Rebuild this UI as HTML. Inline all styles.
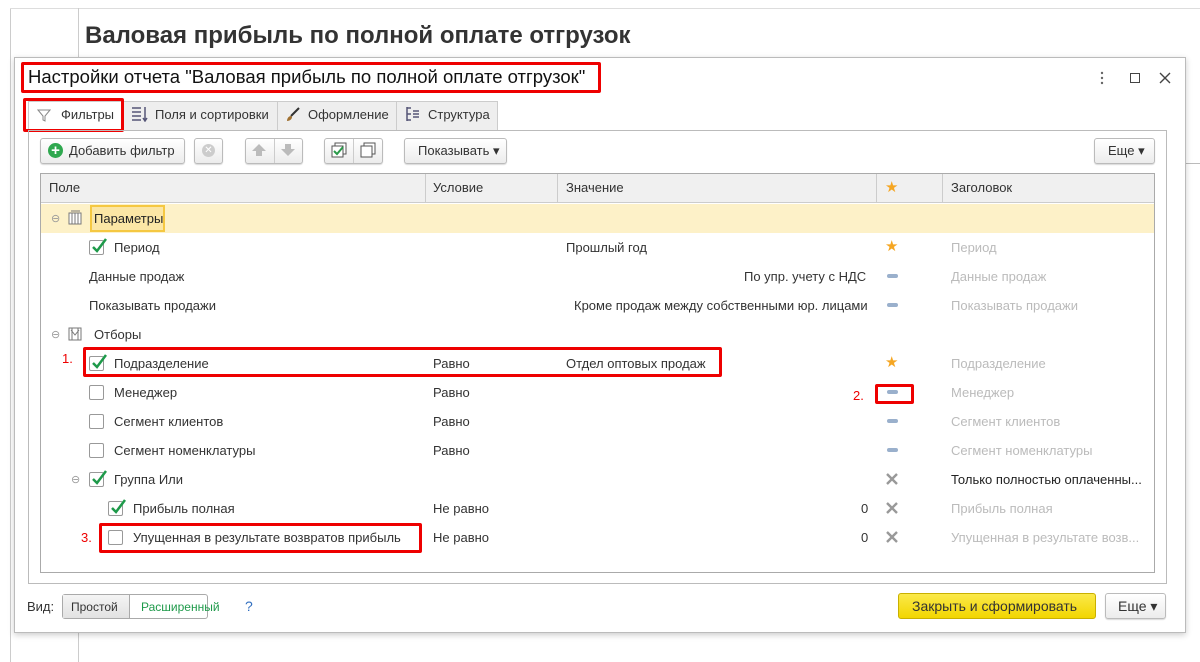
<!DOCTYPE html>
<html><head><meta charset="utf-8"><style>
*{box-sizing:border-box;margin:0;padding:0}
body{width:1200px;height:662px;position:relative;overflow:hidden;background:#fff;font-family:"Liberation Sans",Arial,sans-serif;font-size:13px;color:#333}
.a{position:absolute;white-space:nowrap}
.red{position:absolute;border:3px solid #e00;border-radius:2px}
.rl{position:absolute;color:#e00;font-size:13px}
.btn{position:absolute;border:1px solid #bbb;border-radius:3px;background:linear-gradient(#fff,#ececec);box-shadow:0 1px 1px rgba(0,0,0,.15)}
.cb{position:absolute;width:15px;height:15px;border:1px solid #999;border-radius:2px;background:#fff}
.cb svg{position:absolute;left:0;top:-4px}
.t{position:absolute;white-space:nowrap;line-height:16px}
.g{color:#bbb}
.dash{position:absolute;width:11px;height:4px;background:#9ab0cc;border-radius:2px}
.x{position:absolute}
.star{position:absolute;color:#f5a623;font-size:15px;line-height:14px}
</style></head><body>
<div class="a" style="left:10px;top:8px;width:1px;height:654px;background:#ccc"></div>
<div class="a" style="left:10px;top:8px;width:1190px;height:1px;background:#ddd"></div>
<div class="a" style="left:78px;top:8px;width:1px;height:654px;background:#ccc"></div>
<div class="a" style="left:1185px;top:163px;width:15px;height:1px;background:#bbb"></div>
<div class="a" style="left:85px;top:22px;font-size:24px;font-weight:bold;color:#333">Валовая прибыль по полной оплате отгрузок</div>

<div class="a" style="left:14px;top:57px;width:1172px;height:576px;background:#fff;border:1px solid #bbb;box-shadow:0 2px 6px rgba(0,0,0,.2)"></div>
<div class="a" style="left:28px;top:66px;font-size:18.5px;color:#111">Настройки отчета "Валовая прибыль по полной оплате отгрузок"</div>
<div class="red" style="left:21px;top:62px;width:580px;height:31px"></div>
<svg class="a" style="left:1098px;top:70px" width="8" height="16"><circle cx="4" cy="3" r="1.2" fill="#666"/><circle cx="4" cy="8" r="1.2" fill="#666"/><circle cx="4" cy="13" r="1.2" fill="#666"/></svg>
<div class="a" style="left:1130px;top:73px;width:10px;height:10px;border:1.5px solid #444"></div>
<svg class="a" style="left:1159px;top:72px" width="12" height="12"><path d="M1 1l10 10M11 1L1 11" stroke="#444" stroke-width="1.4"/></svg>

<!-- tabs -->
<div class="a" style="left:28px;top:101px;width:470px;height:29px;background:#eee;border:1px solid #ccc;border-bottom:none"></div>
<div class="a" style="left:28px;top:101px;width:94px;height:30px;background:#fff;border:1px solid #ccc;border-bottom:none"></div>
<div class="a" style="left:122px;top:101px;width:1px;height:29px;background:#ccc"></div>
<div class="a" style="left:277px;top:101px;width:1px;height:29px;background:#ccc"></div>
<div class="a" style="left:396px;top:101px;width:1px;height:29px;background:#ccc"></div>
<svg class="a" style="left:37px;top:108px" width="14" height="14"><path d="M1 2h12l-5 6v5l-2-1v-4z" fill="none" stroke="#888"/></svg>
<div class="t" style="left:61px;top:107px">Фильтры</div>
<svg class="a" style="left:131px;top:106px" width="18" height="16"><g stroke="#557" stroke-width="1.5"><path d="M1 2h9M1 6h9M1 10h9M1 14h9"/><path d="M14 1v14M12 12l2 3 2-3" fill="none"/></g></svg>
<div class="t" style="left:155px;top:107px">Поля и сортировки</div>
<svg class="a" style="left:285px;top:106px" width="16" height="16"><path d="M14 2L6 10" stroke="#333" stroke-width="2"/><path d="M6 10c-2 0-4 2-4 5 3 0 5-2 5-4z" fill="#a07030"/></svg>
<div class="t" style="left:308px;top:107px">Оформление</div>
<svg class="a" style="left:405px;top:106px" width="16" height="16"><g stroke="#557" stroke-width="1.5" fill="none"><path d="M2 1v14M2 2h4M2 8h4M2 14h4M8 5h6M8 8h6M8 11h6"/></g></svg>
<div class="t" style="left:428px;top:107px">Структура</div>
<div class="red" style="left:23px;top:98px;width:101px;height:34px"></div>

<!-- inner panel -->
<div class="a" style="left:28px;top:130px;width:1139px;height:454px;border:1px solid #bbb"></div>

<!-- toolbar -->
<div class="btn" style="left:40px;top:138px;width:145px;height:26px"></div>
<div class="a" style="left:48px;top:143px;width:15px;height:15px;border-radius:50%;background:#2fa84f;color:#fff;font-weight:bold;font-size:15px;line-height:15px;text-align:center">+</div>
<div class="t" style="left:69px;top:143px">Добавить фильтр</div>
<div class="btn" style="left:194px;top:138px;width:29px;height:26px"></div>
<div class="a" style="left:202px;top:144px;width:13px;height:13px;border-radius:50%;background:#ccc;color:#fff;font-size:10px;line-height:13px;text-align:center">✕</div>
<div class="btn" style="left:245px;top:138px;width:58px;height:26px"></div>
<div class="a" style="left:274px;top:139px;width:1px;height:24px;background:#ccc"></div>
<svg class="a" style="left:251px;top:143px" width="16" height="14"><path d="M8 1l7 7h-4v5H5V8H1z" fill="#bbb"/></svg>
<svg class="a" style="left:280px;top:143px" width="16" height="14"><path d="M8 13l7-7h-4V1H5v5H1z" fill="#bbb"/></svg>
<div class="btn" style="left:324px;top:138px;width:59px;height:26px"></div>
<div class="a" style="left:353px;top:139px;width:1px;height:24px;background:#ccc"></div>
<svg class="a" style="left:330px;top:142px" width="18" height="17"><rect x="5" y="1" width="11" height="11" fill="#fff" stroke="#555"/><rect x="2" y="4" width="11" height="11" fill="#fff" stroke="#555"/><path d="M4 9l3 3 6-7" stroke="#2a9a4a" stroke-width="2" fill="none"/></svg>
<svg class="a" style="left:359px;top:142px" width="18" height="17"><rect x="5" y="1" width="11" height="11" fill="#fff" stroke="#555"/><rect x="2" y="4" width="11" height="11" fill="#fff" stroke="#555"/></svg>
<div class="btn" style="left:404px;top:138px;width:103px;height:26px"></div>
<div class="t" style="left:418px;top:143px">Показывать ▾</div>
<div class="btn" style="left:1094px;top:138px;width:61px;height:26px"></div>
<div class="t" style="left:1108px;top:143px">Еще ▾</div>

<!-- table -->
<div class="a" style="left:40px;top:173px;width:1115px;height:400px;border:1px solid #aaa"></div>
<div class="a" style="left:41px;top:174px;width:1113px;height:29px;background:#f0f0f0;border-bottom:1px solid #ccc"></div>
<div class="a" style="left:425px;top:174px;width:1px;height:29px;background:#ccc"></div>
<div class="a" style="left:557px;top:174px;width:1px;height:29px;background:#ccc"></div>
<div class="a" style="left:876px;top:174px;width:1px;height:29px;background:#ccc"></div>
<div class="a" style="left:942px;top:174px;width:1px;height:29px;background:#ccc"></div>
<div class="t" style="left:49px;top:180px">Поле</div>
<div class="t" style="left:433px;top:180px">Условие</div>
<div class="t" style="left:566px;top:180px">Значение</div>
<div class="star" style="left:885px;top:181px">★</div>
<div class="t" style="left:951px;top:180px">Заголовок</div>

<div class="a" style="left:41px;top:204px;width:1113px;height:29px;background:#fdf1c8"></div>
<div class="a" style="left:51px;top:212px;color:#999;font-size:11px">⊖</div>
<svg class="a" style="left:68px;top:209px" width="15" height="16"><rect x="1" y="4" width="12" height="11" fill="#fff" stroke="#777"/><path d="M4 4v11M7 4v11M10 4v11M3 2h9" stroke="#777"/></svg>
<div class="a" style="left:90px;top:205px;width:75px;height:27px;border:2px solid #f5c842;background:#fbe6a5"></div>
<div class="t" style="left:94px;top:211px;color:#222">Параметры</div>

<div class="cb" style="left:89px;top:240px"><svg width="18" height="18"><path d="M3 10l4 4 9-12" stroke="#1e9a4a" stroke-width="2.5" fill="none"/></svg></div>
<div class="t" style="left:114px;top:240px">Период</div>
<div class="t" style="left:566px;top:240px">Прошлый год</div>
<div class="star" style="left:885px;top:240px">★</div>
<div class="t g" style="left:951px;top:240px">Период</div>

<div class="t" style="left:89px;top:269px">Данные продаж</div>
<div class="t" style="left:744px;top:269px">По упр. учету с НДС</div>
<div class="dash" style="left:887px;top:274px"></div>
<div class="t g" style="left:951px;top:269px">Данные продаж</div>

<div class="t" style="left:89px;top:298px">Показывать продажи</div>
<div class="t" style="left:574px;top:298px">Кроме продаж между собственными юр. лицами</div>
<div class="dash" style="left:887px;top:303px"></div>
<div class="t g" style="left:951px;top:298px">Показывать продажи</div>

<div class="a" style="left:51px;top:328px;color:#999;font-size:11px">⊖</div>
<svg class="a" style="left:68px;top:325px" width="15" height="16"><rect x="1" y="3" width="12" height="12" fill="#fff" stroke="#777"/><path d="M4 3v12M10 3v12M3 5l4 5 4-5" stroke="#777" fill="none"/></svg>
<div class="t" style="left:94px;top:327px">Отборы</div>

<div class="cb" style="left:89px;top:356px"><svg width="18" height="18"><path d="M3 10l4 4 9-12" stroke="#1e9a4a" stroke-width="2.5" fill="none"/></svg></div>
<div class="t" style="left:114px;top:356px">Подразделение</div>
<div class="t" style="left:433px;top:356px">Равно</div>
<div class="t" style="left:566px;top:356px">Отдел оптовых продаж</div>
<div class="star" style="left:885px;top:356px">★</div>
<div class="t g" style="left:951px;top:356px">Подразделение</div>

<div class="cb" style="left:89px;top:385px"></div>
<div class="t" style="left:114px;top:385px">Менеджер</div>
<div class="t" style="left:433px;top:385px">Равно</div>
<div class="dash" style="left:887px;top:390px"></div>
<div class="t g" style="left:951px;top:385px">Менеджер</div>

<div class="cb" style="left:89px;top:414px"></div>
<div class="t" style="left:114px;top:414px">Сегмент клиентов</div>
<div class="t" style="left:433px;top:414px">Равно</div>
<div class="dash" style="left:887px;top:419px"></div>
<div class="t g" style="left:951px;top:414px">Сегмент клиентов</div>

<div class="cb" style="left:89px;top:443px"></div>
<div class="t" style="left:114px;top:443px">Сегмент номенклатуры</div>
<div class="t" style="left:433px;top:443px">Равно</div>
<div class="dash" style="left:887px;top:448px"></div>
<div class="t g" style="left:951px;top:443px">Сегмент номенклатуры</div>

<div class="a" style="left:71px;top:473px;color:#999;font-size:11px">⊖</div>
<div class="cb" style="left:89px;top:472px"><svg width="18" height="18"><path d="M3 10l4 4 9-12" stroke="#1e9a4a" stroke-width="2.5" fill="none"/></svg></div>
<div class="t" style="left:114px;top:472px">Группа Или</div>
<svg class="x" style="left:886px;top:473px" width="12" height="12"><path d="M1 1l10 10M11 1L1 11" stroke="#999" stroke-width="2.4"/></svg>
<div class="t" style="left:951px;top:472px;color:#222">Только полностью оплаченны...</div>

<div class="cb" style="left:108px;top:501px"><svg width="18" height="18"><path d="M3 10l4 4 9-12" stroke="#1e9a4a" stroke-width="2.5" fill="none"/></svg></div>
<div class="t" style="left:133px;top:501px">Прибыль полная</div>
<div class="t" style="left:433px;top:501px">Не равно</div>
<div class="t" style="left:861px;top:501px">0</div>
<svg class="x" style="left:886px;top:502px" width="12" height="12"><path d="M1 1l10 10M11 1L1 11" stroke="#999" stroke-width="2.4"/></svg>
<div class="t g" style="left:951px;top:501px">Прибыль полная</div>

<div class="cb" style="left:108px;top:530px"></div>
<div class="t" style="left:133px;top:530px">Упущенная в результате возвратов прибыль</div>
<div class="t" style="left:433px;top:530px">Не равно</div>
<div class="t" style="left:861px;top:530px">0</div>
<svg class="x" style="left:886px;top:531px" width="12" height="12"><path d="M1 1l10 10M11 1L1 11" stroke="#999" stroke-width="2.4"/></svg>
<div class="t g" style="left:951px;top:530px">Упущенная в результате возв...</div>

<!-- red annotations -->
<div class="red" style="left:83px;top:347px;width:639px;height:30px"></div>
<div class="rl" style="left:62px;top:351px">1.</div>
<div class="red" style="left:875px;top:384px;width:39px;height:20px"></div>
<div class="rl" style="left:853px;top:388px">2.</div>
<div class="red" style="left:99px;top:523px;width:323px;height:30px"></div>
<div class="rl" style="left:81px;top:530px">3.</div>

<!-- bottom -->
<div class="t" style="left:27px;top:599px">Вид:</div>
<div class="a" style="left:62px;top:594px;width:146px;height:25px;border:1px solid #aaa;border-radius:3px"></div>
<div class="a" style="left:63px;top:595px;width:67px;height:23px;background:linear-gradient(#f4f4f4,#e2e2e2);border-right:1px solid #aaa"></div>
<div class="t" style="left:71px;top:599px;font-size:12px">Простой</div>
<div class="t" style="left:141px;top:599px;color:#1e9a4a;font-size:12px">Расширенный</div>
<div class="t" style="left:245px;top:598px;color:#3370c0;font-size:14px">?</div>

<div class="a" style="left:898px;top:593px;width:198px;height:26px;border:1px solid #c9b000;border-radius:3px;background:linear-gradient(#fbe94a,#f2d600)"></div>
<div class="t" style="left:912px;top:598px;font-size:14px;color:#333">Закрыть и сформировать</div>
<div class="btn" style="left:1105px;top:593px;width:61px;height:26px"></div>
<div class="t" style="left:1118px;top:598px;font-size:14px">Еще ▾</div>
</body></html>
